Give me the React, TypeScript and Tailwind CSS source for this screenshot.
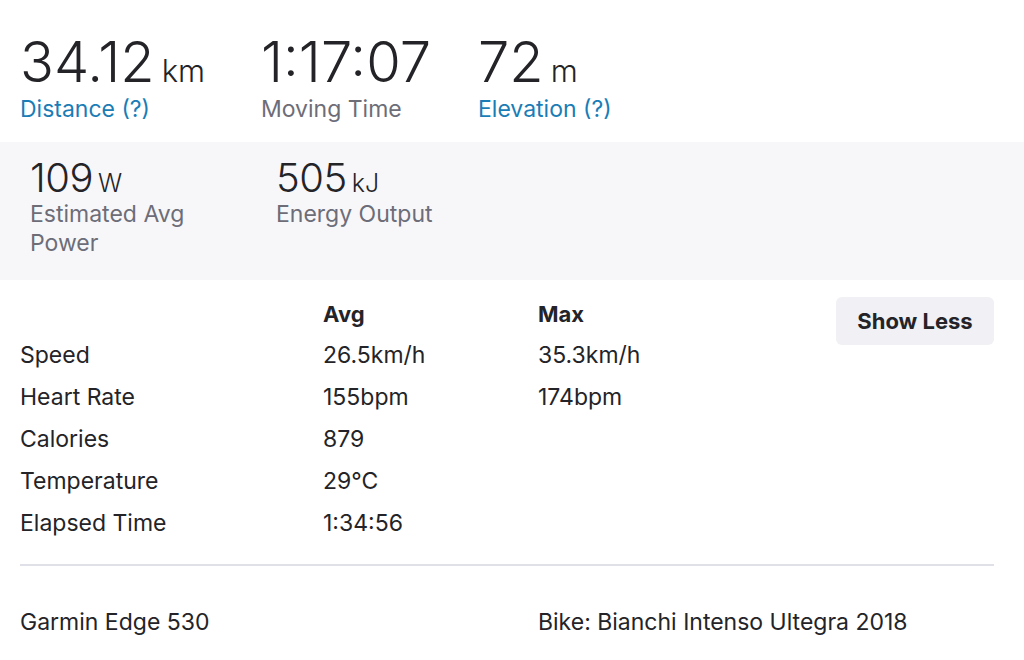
const font = { fontFamily: "Inter, 'Noto Sans', sans-serif" };

const topStats = [
  { value: "34.12", unit: "km", label: "Distance (?)", link: true, width: "w-[241px]" },
  { value: "1:17:07", unit: "", label: "Moving Time", link: false, width: "w-[217px]" },
  { value: "72", unit: "m", label: "Elevation (?)", link: true, width: "w-[220px]" },
];

const rows = [
  { name: "Speed", avg: "26.5km/h", max: "35.3km/h" },
  { name: "Heart Rate", avg: "155bpm", max: "174bpm" },
  { name: "Calories", avg: "879", max: "" },
  { name: "Temperature", avg: "29℃", max: "" },
  { name: "Elapsed Time", avg: "1:34:56", max: "" },
];

export default function App() {
  return (
    <div className="h-[660px] w-[1024px] overflow-hidden bg-white text-[#242428]" style={font}>
      {/* headline stats */}
      <div className="flex px-5 pt-[34px] pb-[19px]">
        {topStats.map((s) => (
          <div key={s.label} className={s.width}>
            <div className="flex h-[56px] items-baseline leading-none">
              <span className="text-[56px] font-light">{s.value}</span>
              {s.unit && <span className="ml-[7px] text-[31px] font-light">{s.unit}</span>}
            </div>
            <div
              className={`mt-[5px] text-[23px] leading-[28px] ${
                s.link ? "text-[#1a7db6]" : "text-[#6d6d78]"
              }`}
            >
              {s.label}
            </div>
          </div>
        ))}
      </div>

      {/* secondary stats */}
      <div className="flex h-[138px] bg-[#f7f7fa] px-[30px] pt-[16px]">
        <div className="w-[246px]">
          <div className="flex h-[40px] items-baseline leading-none">
            <span className="text-[40px] font-light tracking-[-0.5px]">109</span>
            <span className="ml-[5px] text-[25px] font-light">W</span>
          </div>
          <div className="mt-[2px] w-[200px] text-[23px] leading-[29px] text-[#6d6d78]">
            Estimated Avg Power
          </div>
        </div>
        <div className="w-[246px]">
          <div className="flex h-[40px] items-baseline leading-none">
            <span className="text-[40px] font-light tracking-[-0.5px]">505</span>
            <span className="ml-[5px] text-[25px] font-light">kJ</span>
          </div>
          <div className="mt-[2px] text-[23px] leading-[29px] text-[#6d6d78]">Energy Output</div>
        </div>
      </div>

      {/* avg / max table */}
      <div className="flex pl-5 pr-[30px] pt-[13px]">
        <div className="flex-1">
          <div className="flex h-[41px] text-[22px] font-bold leading-[42px]">
            <div className="w-[303px]" />
            <div className="w-[215px]">Avg</div>
            <div>Max</div>
          </div>
          {rows.map((r) => (
            <div key={r.name} className="flex h-[42px] text-[23px] leading-[42px]">
              <div className="w-[303px]">{r.name}</div>
              <div className="w-[215px]">{r.avg}</div>
              <div>{r.max}</div>
            </div>
          ))}
        </div>
        <div>
          <button className="mt-[4px] h-[48px] w-[158px] rounded-[6px] bg-[#f0f0f5] text-[22px] font-bold">
            Show Less
          </button>
        </div>
      </div>

      <div className="ml-5 mr-[30px] mt-[20px] h-[2px] bg-[#e0e0e8]" />

      <div className="flex px-5 pt-[42px] text-[23px] leading-[28px]">
        <div className="w-[518px]">Garmin Edge 530</div>
        <div>Bike: Bianchi Intenso Ultegra 2018</div>
      </div>
    </div>
  );
}
